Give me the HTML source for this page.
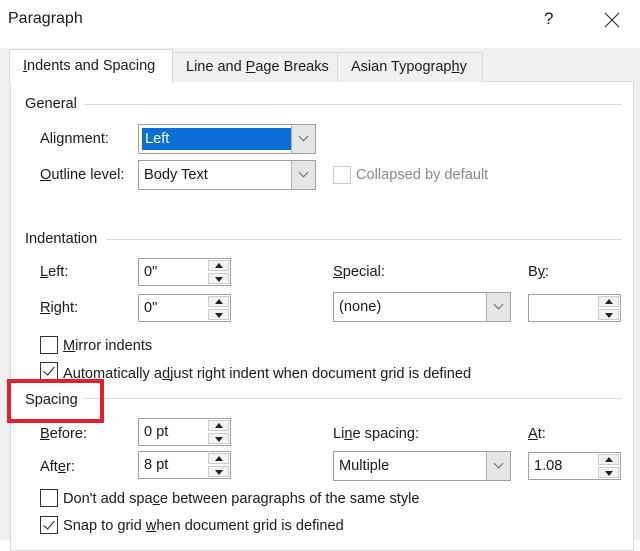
<!DOCTYPE html>
<html><head><style>
*{margin:0;padding:0;box-sizing:border-box}
body{width:640px;height:540px;overflow:hidden;background:#fff;font-family:"Liberation Sans",sans-serif;font-size:14.6px;color:#1a1a1a;position:relative}
.a{position:absolute;white-space:nowrap}
.gray{position:absolute;left:0;top:48px;width:640px;height:492px;background:#f0f0f0}
.panel{position:absolute;left:10px;top:81px;width:624px;height:470px;background:#fff;border:1px solid #d9d9d9}
.tab{position:absolute;top:52px;height:30px;background:#f0f0f0;border:1px solid #d9d9d9;border-bottom:none;padding:6px 0 0 13px;font-size:14.5px}
.tab.act{background:#fff;top:49px;height:34px;padding-top:8px}
.hr{position:absolute;height:1px;background:#dcdcdc}
.box{position:absolute;border:1px solid #a0a0a0;background:#fff}
.sel .btn{position:absolute;right:0;top:0;bottom:0;width:24px;background:#e6e6e6;border-left:1px solid #b0b0b0}
.sel .btn:after{content:"";position:absolute;left:8px;top:8px;width:6px;height:6px;border-right:1px solid #666;border-bottom:1px solid #666;transform:rotate(45deg)}
.spin .up,.spin .dn{position:absolute;right:1px;width:21px;height:11px;background:#f3f3f3;border:1px solid #ccc}
.spin .up{top:1px}.spin .dn{bottom:1px}
.spin .up:after{content:"";position:absolute;left:6px;top:2px;border:4px solid transparent;border-bottom:5px solid #222;border-top:none}
.spin .dn:after{content:"";position:absolute;left:6px;top:3px;border:4px solid transparent;border-top:5px solid #222;border-bottom:none}
.txt{position:absolute;left:5px;top:5px}
.sel .txt{top:6px}
.cb{position:absolute;width:18px;height:18px;border:1px solid #333;background:#fff}
.cb.chk:after{content:"";position:absolute;left:5px;top:1px;width:5px;height:10px;border-right:1.5px solid #222;border-bottom:1.5px solid #222;transform:rotate(40deg)}
u{text-decoration:underline}
</style></head><body>
<div class="a" style="left:8px;top:10px;font-size:16px">Paragraph</div>
<div class="a" style="left:544px;top:9px;font-size:17px">?</div>
<svg class="a" style="left:604px;top:12px" width="16" height="16"><path d="M1 1L15 15M15 1L1 15" stroke="#333" stroke-width="1.2"/></svg>
<div class="gray"></div>
<div class="panel"></div>
<div class="tab" style="left:172px;width:166px">Line and <u>P</u>age Breaks</div>
<div class="tab" style="left:337px;width:146px">Asian Typograp<u>h</u>y</div>
<div class="tab act" style="left:9px;width:164px"><u>I</u>ndents and Spacing</div>

<div class="a" style="left:25px;top:96px">General</div><div class="hr" style="left:84px;top:104px;width:538px"></div>
<div class="a" style="left:40px;top:131px">Alignment:</div>
<div class="box sel" style="left:138px;top:124px;width:178px;height:30px"><div style="position:absolute;left:3px;top:3px;width:150px;height:22px;background:#0c6fd6;color:#fff;padding:3px 0 0 3px">Left</div><div class="btn"></div></div>
<div class="a" style="left:40px;top:167px"><u>O</u>utline level:</div>
<div class="box sel" style="left:138px;top:160px;width:178px;height:30px"><div class="txt">Body Text</div><div class="btn"></div></div>
<div class="cb" style="left:333px;top:166px;border-color:#ccc"></div>
<div class="a" style="left:356px;top:167px;color:#888">Collapsed by default</div>

<div class="a" style="left:25px;top:231px">Indentation</div><div class="hr" style="left:106px;top:239px;width:516px"></div>
<div class="a" style="left:40px;top:264px"><u>L</u>eft:</div>
<div class="box spin" style="left:138px;top:258px;width:93px;height:28px"><div class="txt">0"</div><div class="up"></div><div class="dn"></div></div>
<div class="a" style="left:40px;top:300px"><u>R</u>ight:</div>
<div class="box spin" style="left:138px;top:294px;width:93px;height:28px"><div class="txt">0"</div><div class="up"></div><div class="dn"></div></div>
<div class="a" style="left:333px;top:264px"><u>S</u>pecial:</div>
<div class="a" style="left:528px;top:264px">B<u>y</u>:</div>
<div class="box sel" style="left:333px;top:292px;width:178px;height:30px"><div class="txt">(none)</div><div class="btn"></div></div>
<div class="box spin" style="left:528px;top:294px;width:93px;height:28px"><div class="up"></div><div class="dn"></div></div>
<div class="cb" style="left:40px;top:336px"></div><div class="a" style="left:63px;top:338px"><u>M</u>irror indents</div>
<div class="cb chk" style="left:40px;top:362px"></div><div class="a" style="left:63px;top:366px">Automatically a<u>d</u>just right indent when document grid is defined</div>

<div class="a" style="left:25px;top:392px">Spacing</div><div class="hr" style="left:84px;top:398px;width:538px"></div>
<div class="a" style="left:7px;top:379px;width:97px;height:44px;border:4px solid #e0202a"></div>
<div class="a" style="left:40px;top:426px"><u>B</u>efore:</div>
<div class="box spin" style="left:138px;top:418px;width:93px;height:28px"><div class="txt">0 pt</div><div class="up"></div><div class="dn"></div></div>
<div class="a" style="left:40px;top:459px">Aft<u>e</u>r:</div>
<div class="box spin" style="left:138px;top:451px;width:93px;height:28px"><div class="txt">8 pt</div><div class="up"></div><div class="dn"></div></div>
<div class="a" style="left:333px;top:426px">Li<u>n</u>e spacing:</div>
<div class="a" style="left:528px;top:426px"><u>A</u>t:</div>
<div class="box sel" style="left:333px;top:451px;width:178px;height:30px"><div class="txt">Multiple</div><div class="btn"></div></div>
<div class="box spin" style="left:528px;top:452px;width:93px;height:28px"><div class="txt">1.08</div><div class="up"></div><div class="dn"></div></div>
<div class="cb" style="left:40px;top:489px"></div><div class="a" style="left:63px;top:491px">Don't add spa<u>c</u>e between paragraphs of the same style</div>
<div class="cb chk" style="left:40px;top:516px"></div><div class="a" style="left:63px;top:518px">Snap to grid <u>w</u>hen document grid is defined</div>
</body></html>
